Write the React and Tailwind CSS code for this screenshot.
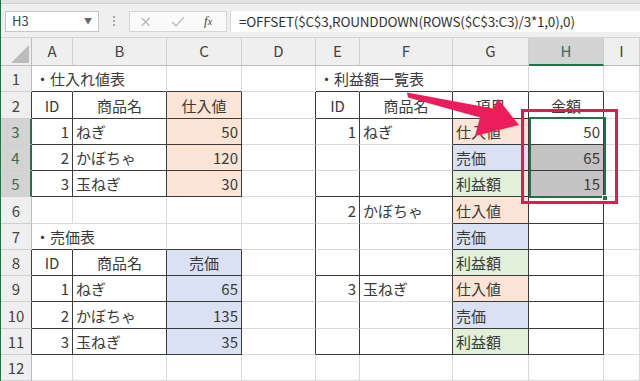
import React from 'react';

const COLS = ['A', 'B', 'C', 'D', 'E', 'F', 'G', 'H', 'I'];
const BLACK = 'black';
const LIGHT = 'light';

const ORANGE = 'bg-[#fce4d6]';
const BLUE = 'bg-[#d9e1f2]';
const GREEN = 'bg-[#e2efda]';
const GRAY = 'bg-[#c3c3c3]';

// cell: [text, align, fill]
const ROWS = {
  1: { 0: ['・仕入れ値表', 'l'], 4: ['・利益額一覧表', 'l'] },
  2: {
    0: ['ID', 'c'], 1: ['商品名', 'c'], 2: ['仕入値', 'c', ORANGE],
    4: ['ID', 'c'], 5: ['商品名', 'c'], 6: ['項目', 'c'], 7: ['金額', 'c'],
  },
  3: {
    0: ['1', 'r'], 1: ['ねぎ', 'l'], 2: ['50', 'r', ORANGE],
    4: ['1', 'r'], 5: ['ねぎ', 'l'], 6: ['仕入値', 'l', ORANGE], 7: ['50', 'r'],
  },
  4: {
    0: ['2', 'r'], 1: ['かぼちゃ', 'l'], 2: ['120', 'r', ORANGE],
    6: ['売価', 'l', BLUE], 7: ['65', 'r', GRAY],
  },
  5: {
    0: ['3', 'r'], 1: ['玉ねぎ', 'l'], 2: ['30', 'r', ORANGE],
    6: ['利益額', 'l', GREEN], 7: ['15', 'r', GRAY],
  },
  6: { 4: ['2', 'r'], 5: ['かぼちゃ', 'l'], 6: ['仕入値', 'l', ORANGE] },
  7: { 0: ['・売価表', 'l'], 6: ['売価', 'l', BLUE] },
  8: { 0: ['ID', 'c'], 1: ['商品名', 'c'], 2: ['売価', 'c', BLUE], 6: ['利益額', 'l', GREEN] },
  9: {
    0: ['1', 'r'], 1: ['ねぎ', 'l'], 2: ['65', 'r', BLUE],
    4: ['3', 'r'], 5: ['玉ねぎ', 'l'], 6: ['仕入値', 'l', ORANGE],
  },
  10: { 0: ['2', 'r'], 1: ['かぼちゃ', 'l'], 2: ['135', 'r', BLUE], 6: ['売価', 'l', BLUE] },
  11: { 0: ['3', 'r'], 1: ['玉ねぎ', 'l'], 2: ['35', 'r', BLUE], 6: ['利益額', 'l', GREEN] },
  12: {},
};

const inTable = (r) => (r >= 2 && r <= 5) || (r >= 8 && r <= 11);

function rightEdge(r, c) {
  if ((r === 1 && c === 0) || (r === 1 && c === 4) || (r === 7 && c === 0)) return 'none';
  if (c <= 2 && inTable(r)) return BLACK;
  if (c >= 3 && c <= 7 && r >= 2 && r <= 11) return BLACK;
  return LIGHT;
}

function bottomEdge(r, c) {
  if (c <= 2 && ((r >= 1 && r <= 5) || (r >= 7 && r <= 11))) return BLACK;
  if (c >= 4 && c <= 7 && (r === 1 || r === 2)) return BLACK;
  if (c >= 6 && c <= 7 && r >= 3 && r <= 11) return BLACK;
  if ((c === 4 || c === 5) && (r === 5 || r === 8 || r === 11)) return BLACK;
  return LIGHT;
}

const RIGHT_CLS = {
  black: 'border-r-[#3c3c3c]',
  light: 'border-r-[#dadada]',
  none: 'border-r-transparent',
};
const BOTTOM_CLS = {
  black: 'border-b-[#3c3c3c]',
  light: 'border-b-[#dadada]',
};
const ALIGN_CLS = { l: 'justify-start', c: 'justify-center', r: 'justify-end' };

function Cell({ r, c }) {
  const cell = ROWS[r][c];
  const [text, align, fill] = cell || [];
  return (
    <div
      className={`relative flex items-center px-[3px] pt-[2px] border-r border-b whitespace-nowrap text-[15px] text-[#3a3a3a] ${RIGHT_CLS[rightEdge(r, c)]} ${BOTTOM_CLS[bottomEdge(r, c)]} ${fill || ''} ${ALIGN_CLS[align || 'l']}`}
    >
      {text && <span className="relative z-10">{text}</span>}
    </div>
  );
}

function RowHeader({ r }) {
  const selected = r >= 3 && r <= 5;
  const edge = selected
    ? 'border-r-2 border-r-[#217346]'
    : inTable(r)
      ? 'border-r border-r-[#3c3c3c]'
      : 'border-r border-r-[#bdbdbd]';
  return (
    <div
      className={`flex items-center justify-center pt-[2px] border-b border-b-[#cfcfcf] text-[15px] ${edge} ${selected ? 'bg-[#d3d3d3] text-[#3d6b4c]' : 'bg-[#efefef] text-[#444]'}`}
    >
      {r}
    </div>
  );
}

function FormulaBar() {
  return (
    <div className="h-[38px] bg-[#efefef] border-b border-[#d4d4d4] flex flex-col">
      <div className="h-[4px] bg-[#e3e3e3] border-b border-[#d0d0d0]" />
      <div className="flex items-center pt-[6px] h-[28px]">
        <div className="ml-[4px] w-[94px] h-[21px] bg-white border border-[#c6c6c6] flex items-center justify-between pl-[6px] pr-[6px]">
          <span className="text-[13px] text-[#444]">H3</span>
          <span className="text-[8px] text-[#666]">▼</span>
        </div>
        <div className="w-[30px] flex flex-col items-center gap-[2px]">
          <span className="w-[2px] h-[2px] bg-[#a8a8a8]" />
          <span className="w-[2px] h-[2px] bg-[#a8a8a8]" />
          <span className="w-[2px] h-[2px] bg-[#a8a8a8]" />
        </div>
        <div className="w-[98px] h-[21px] bg-[#fafafa] border border-[#d6d6d6] flex items-center">
          <svg width="98" height="19" viewBox="0 0 98 19">
            <path d="M12 6 L20 14 M20 6 L12 14" stroke="#b4b4b4" strokeWidth="1.3" />
            <path d="M43 10 L47 14 L55 5" stroke="#b4b4b4" strokeWidth="1.3" fill="none" />
          </svg>
          <span className="absolute ml-[74px] text-[13px] italic text-[#444] font-['Liberation_Serif',serif]">
            f<span className="text-[10px]">x</span>
          </span>
        </div>
        <div className="ml-[3px] flex-1 h-[21px] bg-white border-l border-[#d6d6d6] flex items-center pl-[8px] text-[13.5px] text-[#333] tracking-[-0.2px] whitespace-nowrap">
          =OFFSET($C$3,ROUNDDOWN(ROWS($C$3:C3)/3*1,0),0)
        </div>
      </div>
    </div>
  );
}

function Arrow() {
  return (
    <svg className="absolute top-0 left-0 pointer-events-none z-30" width="640" height="381" viewBox="0 0 640 381">
      <polygon
        points="406,92.5 492,108.5 497,99 518,125 474,136 479,117.5 407,97.5"
        fill="#ec1d5b"
        strokeLinejoin="round"
      />
    </svg>
  );
}

export default function App() {
  const rows = Array.from({ length: 12 }, (_, i) => i + 1);
  return (
    <div className="relative w-[640px] h-[381px] overflow-hidden bg-white border-l border-[#217346] font-['Noto_Sans_CJK_JP','Noto_Sans',sans-serif]">
      <FormulaBar />
      <div className="grid grid-cols-[31px_41px_94px_75px_74px_44px_93px_76px_75px_36px] grid-rows-[28px_repeat(12,26.25px)]">
        {/* column headers */}
        <div className="relative bg-[#efefef] border-r border-b border-[#bdbdbd]">
          <svg className="absolute right-[2px] bottom-[2px]" width="18" height="18" viewBox="0 0 18 18">
            <polygon points="18,0 18,18 0,18" fill="#bcbcbc" />
          </svg>
        </div>
        {COLS.map((col) => (
          <div
            key={col}
            className={`flex items-center justify-center text-[15px] border-r border-r-[#cfcfcf] ${
              col === 'H'
                ? 'bg-[#d3d3d3] text-[#3d6b4c] border-b-2 border-b-[#217346]'
                : 'bg-[#efefef] text-[#444] border-b border-b-[#bdbdbd]'
            }`}
          >
            {col}
          </div>
        ))}
        {rows.map((r) => (
          <React.Fragment key={r}>
            <RowHeader r={r} />
            {COLS.map((col, c) => (
              <Cell key={col} r={r} c={c} />
            ))}
          </React.Fragment>
        ))}
      </div>

      {/* selection H3:H5 */}
      <div className="absolute left-[528px] top-[117px] w-[77px] h-[81px] border-2 border-[#217346] z-20 pointer-events-none" />
      <div className="absolute left-[601px] top-[195px] w-[6px] h-[6px] bg-[#217346] border border-white z-20" />

      {/* annotation */}
      <div className="absolute left-[520px] top-[109px] w-[97px] h-[95px] border-[3px] border-[#e8174f] z-20" />
      <Arrow />
    </div>
  );
}
